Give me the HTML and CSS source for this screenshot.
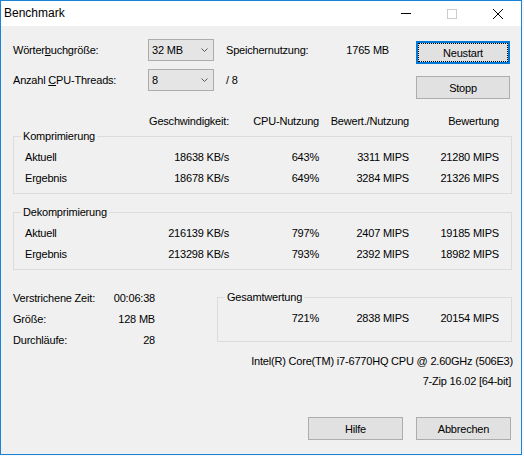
FILE: index.html
```html
<!DOCTYPE html>
<html lang="de">
<head>
<meta charset="utf-8">
<title>Benchmark</title>
<link rel="stylesheet" href="styles.css">
</head>
<body>
<div class="window">
  <div class="titlebar">
    <span class="title">Benchmark</span>
    <div class="controls">
      <span class="ctl"><svg width="10" height="10" viewBox="0 0 10 10"><line x1="0" y1="4.5" x2="10" y2="4.5" stroke="#000" stroke-width="1"/></svg></span>
      <span class="ctl"><svg width="10" height="10" viewBox="0 0 10 10"><rect x="0.5" y="0.5" width="9" height="9" fill="none" stroke="#cccccc" stroke-width="1"/></svg></span>
      <span class="ctl"><svg width="10" height="10" viewBox="0 0 10 10"><path d="M0 0 L10 10 M10 0 L0 10" stroke="#000" stroke-width="1" fill="none"/></svg></span>
    </div>
  </div>
  <div class="client">
    <div class="top">
      <div class="settings">
        <div class="srow">
          <span class="slabel">Wörter<u>b</u>uchgröße:</span>
          <div class="combo"><span>32 MB</span><svg width="7" height="4" viewBox="0 0 7 4"><polyline points="0.5,0.5 3.5,3.5 6.5,0.5" fill="none" stroke="#5a5a5a" stroke-width="1"/></svg></div>
          <div class="mem"><span>Speichernutzung:</span><span>1765 MB</span></div>
        </div>
        <div class="srow">
          <span class="slabel">Anzahl <u>C</u>PU-Threads:</span>
          <div class="combo"><span>8</span><svg width="7" height="4" viewBox="0 0 7 4"><polyline points="0.5,0.5 3.5,3.5 6.5,0.5" fill="none" stroke="#5a5a5a" stroke-width="1"/></svg></div>
          <div class="mem"><span>/ 8</span></div>
        </div>
      </div>
      <div class="side-buttons">
        <button class="btn default">Neustart</button>
        <button class="btn">Stopp</button>
      </div>
    </div>

    <div class="cols header">
      <span></span><span>Geschwindigkeit:</span><span>CPU-Nutzung</span><span>Bewert./Nutzung</span><span>Bewertung</span>
    </div>

    <div class="group">
      <span class="gtitle">Komprimierung</span>
      <div class="grows">
        <div class="cols"><span>Aktuell</span><span>18638 KB/s</span><span>643%</span><span>3311 MIPS</span><span>21280 MIPS</span></div>
        <div class="cols"><span>Ergebnis</span><span>18678 KB/s</span><span>649%</span><span>3284 MIPS</span><span>21326 MIPS</span></div>
      </div>
    </div>

    <div class="group">
      <span class="gtitle">Dekomprimierung</span>
      <div class="grows">
        <div class="cols"><span>Aktuell</span><span>216139 KB/s</span><span>797%</span><span>2407 MIPS</span><span>19185 MIPS</span></div>
        <div class="cols"><span>Ergebnis</span><span>213298 KB/s</span><span>793%</span><span>2392 MIPS</span><span>18982 MIPS</span></div>
      </div>
    </div>

    <div class="bottom">
      <div class="stats">
        <div class="stat"><span>Verstrichene Zeit:</span><span>00:06:38</span></div>
        <div class="stat"><span>Größe:</span><span>128 MB</span></div>
        <div class="stat"><span>Durchläufe:</span><span>28</span></div>
      </div>
      <div class="total">
        <span class="gtitle">Gesamtwertung</span>
        <div class="grows">
          <div class="tcols"><span>721%</span><span>2838 MIPS</span><span>20154 MIPS</span></div>
        </div>
      </div>
    </div>

    <div class="cpu">Intel(R) Core(TM) i7-6770HQ CPU @ 2.60GHz (506E3)</div>
    <div class="ver">7-Zip 16.02 [64-bit]</div>

    <div class="dlg-buttons">
      <button class="btn wide">Hilfe</button>
      <button class="btn wide">Abbrechen</button>
    </div>
  </div>
</div>
</body>
</html>
```

FILE: styles.css
```css
* { box-sizing: border-box; }
html, body { margin: 0; padding: 0; }
body {
  background: #f7f7f7;
  font-family: "Liberation Sans", Arial, sans-serif;
  font-size: 11px;
  letter-spacing: -0.2px;
  color: #000;
}
.window {
  width: 522px;
  height: 455px;
  border: 1px solid #1883d7;
  background: #f0f0f0;
  display: flex;
  flex-direction: column;
}
.titlebar {
  height: 25px;
  flex-shrink: 0;
  background: #fff;
  display: flex;
}
.title {
  font-size: 12px;
  letter-spacing: 0;
  line-height: 25px;
  padding-left: 3px;
}
.controls { margin-left: auto; display: flex; }
.ctl {
  width: 46px;
  height: 25px;
  padding-top: 8px;
  display: flex;
  justify-content: center;
}
.ctl svg { display: block; }

.client {
  flex: 1;
  padding: 0 9px 0 12px;
  display: flex;
  flex-direction: column;
}
.top { display: flex; align-items: flex-start; }
.settings { margin-top: 13px; }
.srow { display: flex; align-items: center; height: 22px; }
.srow + .srow { margin-top: 8px; }
.slabel { width: 135px; }
.combo {
  width: 66px;
  height: 22px;
  border: 1px solid #acacac;
  background: #e5e5e5;
  display: flex;
  align-items: center;
  justify-content: space-between;
  padding: 0 5px 0 3px;
}
.combo svg { display: block; }
.mem {
  margin-left: 12px;
  width: 163px;
  display: flex;
  justify-content: space-between;
}
.side-buttons {
  margin-left: auto;
  margin-right: 2px;
  margin-top: 15px;
  display: flex;
  flex-direction: column;
  gap: 12px;
}
.btn {
  width: 94px;
  height: 23px;
  border: 1px solid #adadad;
  background: #e1e1e1;
  font: inherit;
  letter-spacing: inherit;
  color: #000;
  padding: 0;
  margin: 0;
}
.btn.default {
  border: 2px solid #0078d7;
  outline: 1px dotted #000;
  outline-offset: -3px;
}
.btn.wide { width: 95px; }

.cols {
  display: grid;
  grid-template-columns: 117px 99px 90px 90px 90px;
  height: 21px;
  line-height: 21px;
  white-space: nowrap;
}
.cols > span + span { text-align: right; }
.header { margin-top: 12px; }

.group, .total {
  border: 1px solid #dcdcdc;
}
.group { margin-top: 4px; padding-bottom: 4px; }
.group + .group { margin-top: 18px; }
.gtitle {
  display: block;
  width: max-content;
  margin: -7px 0 0 7px;
  padding: 0 2px;
  line-height: 13px;
  background: #f0f0f0;
}
.grows { padding-top: 4px; }
.group .cols {
  padding-left: 11px;
  grid-template-columns: 105px 99px 90px 90px 90px;
}

.bottom {
  display: flex;
  justify-content: space-between;
  align-items: flex-start;
  margin-top: 18px;
}
.stats { width: 142px; }
.stat {
  display: flex;
  justify-content: space-between;
  height: 21px;
  line-height: 21px;
}
.total {
  width: 295px;
  margin-top: 9px;
  padding-bottom: 12px;
}
.tcols {
  display: grid;
  grid-template-columns: 101px 90px 90px;
  height: 21px;
  line-height: 21px;
  text-align: right;
}
.cpu {
  text-align: right;
  line-height: 20px;
  margin-right: -1px;
  white-space: nowrap;
}
.ver {
  text-align: right;
  line-height: 20px;
  margin-right: 1px;
}
.dlg-buttons {
  display: flex;
  justify-content: flex-end;
  gap: 13px;
  margin-top: 26px;
  margin-right: 1px;
}
```
